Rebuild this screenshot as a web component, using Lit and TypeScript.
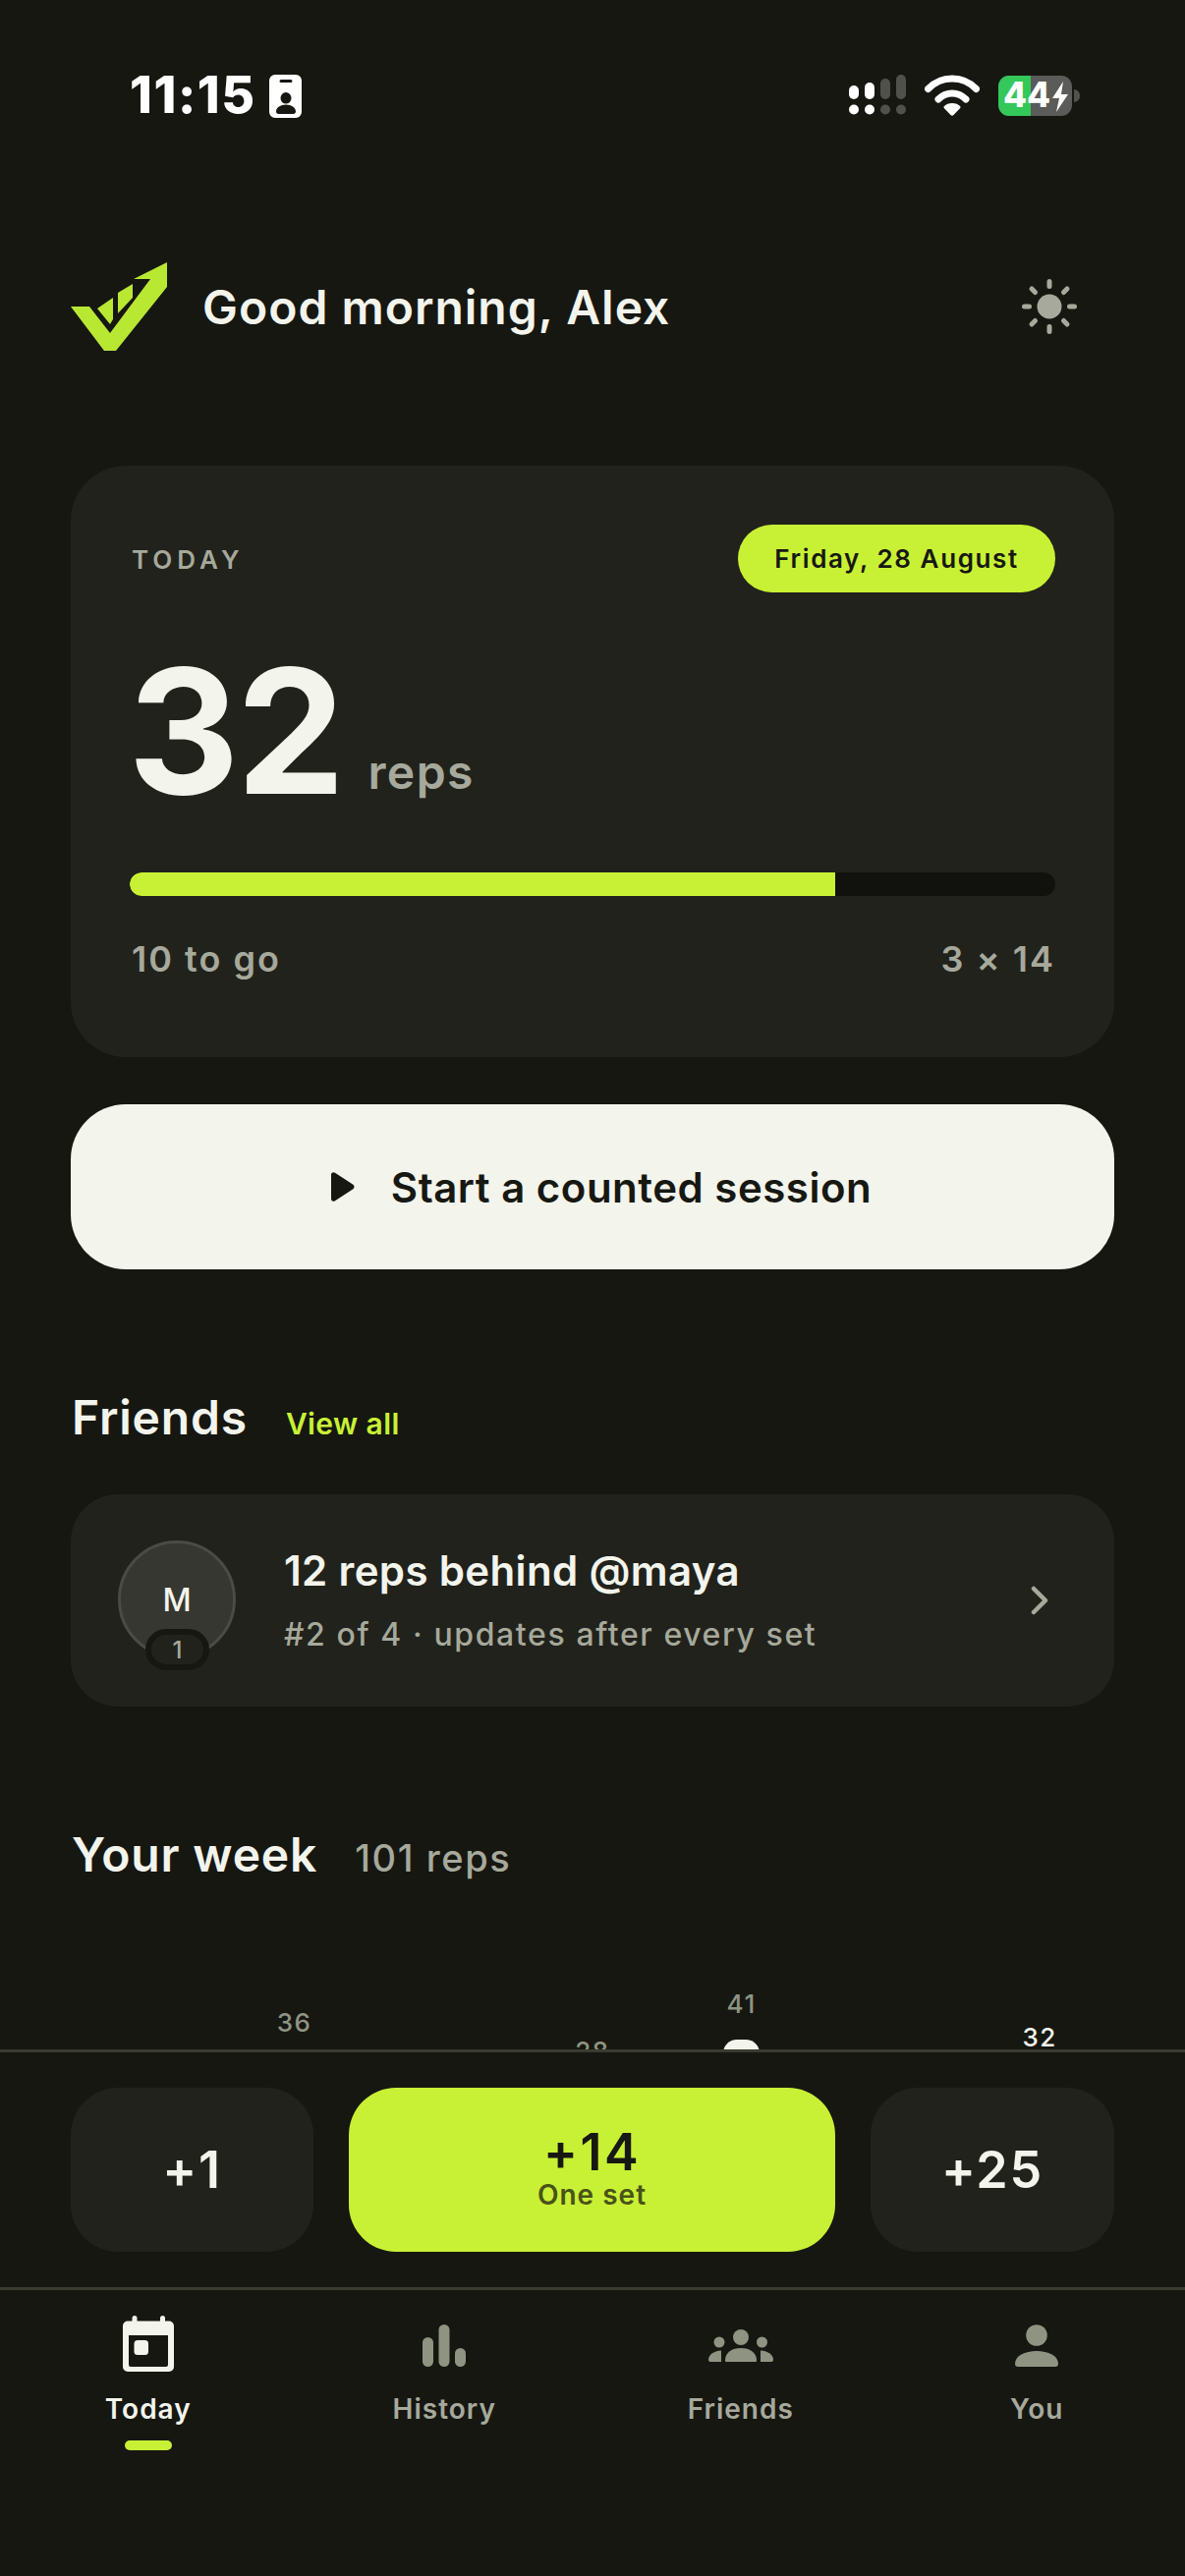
import { LitElement, html, css } from "lit";
import { customElement } from "lit/decorators.js";

const week = [22, 36, 18, 28, 41, 12, 32];

@customElement("app-root")
export class AppRoot extends LitElement {
  static styles = css`
    :host { display: block; width: 1206px; height: 2622px; background: #161711; color: #f3f4ec; font-family: Inter, "Liberation Sans", sans-serif; overflow: hidden; }
    .root { height: 2622px; display: flex; flex-direction: column; }
    .main { flex: 1; min-height: 0; overflow: hidden; padding: 0 72px; }
    svg { display: block; flex: none; }
    .status { height: 267px; box-sizing: border-box; padding: 74px 106px 0 132px; display: flex; align-items: flex-start; margin: 0 -72px; }
    .time { font-size: 52px; font-weight: 800; line-height: 46px; color: #fff; letter-spacing: 1.5px; }
    .badge { margin-left: 13px; margin-top: 2px; }
    .status-right { margin-left: auto; display: flex; align-items: flex-start; gap: 19px; margin-top: 2px; }
    .header { height: 90px; display: flex; align-items: center; margin-bottom: 117px; }
    .greet { margin-left: 36px; font-size: 48px; font-weight: 600; letter-spacing: 1px; flex: 1; }
    .sun { margin-right: 38px; }
    .card { background: #21221c; border-radius: 56px; padding: 60px 60px 0; height: 602px; box-sizing: border-box; }
    .top { display: flex; justify-content: space-between; align-items: center; height: 69px; padding-left: 2px; }
    .today { font-size: 26px; font-weight: 600; letter-spacing: 5px; color: #a6a99b; margin-top: 2px; }
    .pill { background: #c8f135; color: #171812; border-radius: 35px; height: 69px; width: 323px; display: flex; align-items: center; justify-content: center; font-size: 26px; font-weight: 600; letter-spacing: 1.6px; }
    .count { display: flex; align-items: flex-end; height: 225px; margin-top: 28px; margin-left: -2px; }
    .num { font-size: 176px; font-weight: 700; line-height: 225px; letter-spacing: -3px; }
    .unit { font-size: 48px; font-weight: 600; line-height: 60px; color: #a6a99b; margin-left: 26px; letter-spacing: 1.4px; padding-bottom: 40px; }
    .track { height: 24px; margin-top: 32px; border-radius: 12px; background: #11120e; overflow: hidden; }
    .fill { height: 100%; background: #c8f135; border-radius: 12px 0 0 12px; }
    .foot { display: flex; justify-content: space-between; margin-top: 42px; font-size: 36px; font-weight: 600; color: #a6a99b; line-height: 44px; padding-left: 2px; letter-spacing: 2px; }
    .start { height: 168px; margin-top: 48px; background: #f3f4ec; border-radius: 56px; display: flex; align-items: center; justify-content: center; color: #171812; font-size: 42px; font-weight: 600; gap: 37px; letter-spacing: 0.5px; padding-left: 18px; }
    .sec { display: flex; align-items: baseline; }
    .friends-h { margin-top: 121px; height: 60px; }
    h2 { margin: 0; font-size: 48px; font-weight: 600; letter-spacing: 0.8px; line-height: 60px; padding-left: 1px; }
    .view { margin-left: 39px; font-size: 30px; font-weight: 600; color: #c8f135; letter-spacing: 0.4px; }
    .friend { margin-top: 48px; height: 216px; background: #21221c; border-radius: 48px; display: flex; align-items: center; padding: 0 66px 0 48px; }
    .avatar { position: relative; width: 120px; height: 120px; box-sizing: border-box; border-radius: 50%; background: #363730; border: 3px solid #4a4b44; display: flex; align-items: center; justify-content: center; font-size: 32px; font-weight: 500; flex: none; margin-top: -2px; }
    .rank { position: absolute; left: 25px; top: 87px; width: 65px; height: 42px; box-sizing: border-box; border: 6px solid #161711; border-radius: 21px; background: #21221c; color: #a6a99b; display: flex; align-items: center; justify-content: center; font-size: 24px; font-weight: 500; }
    .ftext { flex: 1; margin-left: 49px; }
    .ft { font-size: 42px; font-weight: 600; line-height: 52px; letter-spacing: 0.35px; }
    .fs { font-size: 32px; font-weight: 500; color: #a6a99b; line-height: 44px; margin-top: 17px; letter-spacing: 1.6px; }
    .week-h { margin-top: 121px; }
    .wk { margin-left: 38px; font-size: 38px; font-weight: 500; color: #a6a99b; letter-spacing: 1.6px; }
    .chart { margin-top: 20px; height: 290px; display: grid; grid-template-columns: repeat(7, 1fr); align-items: end; }
    .col { display: flex; flex-direction: column; align-items: center; gap: 22px; }
    .lab { font-size: 26px; font-weight: 500; line-height: 28px; color: #8f9482; letter-spacing: 1.5px; }
    .lab.cur { color: #f3f4ec; font-weight: 500; }
    .bar { width: 35px; background: #3a3b33; border-radius: 14px 14px 0 0; }
    .bar.top { background: #f3f4ec; }
    .bar.cur { background: #c8f135; }
    .bottom { flex: none; background: #161711; border-top: 3px solid #3a3b31; }
    .quick { display: grid; grid-template-columns: 247px 1fr 248px; gap: 36px; padding: 36px 72px; border-bottom: 3px solid #3a3b31; }
    .q { height: 167px; background: #21221c; border-radius: 48px; display: flex; flex-direction: column; align-items: center; justify-content: center; font-size: 52px; font-weight: 600; letter-spacing: 1.8px; }
    .q.main-q { background: #c8f135; color: #171812; }
    .q .big { line-height: 54px; margin-top: -4px; letter-spacing: 2.5px; }
    .q .sm { font-size: 28px; font-weight: 600; letter-spacing: 1px; color: #4a5218; line-height: 30px; margin-top: 1px; }
    .tabs { display: grid; grid-template-columns: repeat(4, 1fr); height: 291px; }
    .tab { display: flex; flex-direction: column; align-items: center; padding-top: 26px; font-size: 28px; font-weight: 600; letter-spacing: 1px; color: #a6a99b; }
    .tab.on { color: #f3f4ec; }
    .ic { height: 58px; margin-bottom: 20px; }
    .lb { line-height: 34px; }
    .ind { width: 48px; height: 10px; border-radius: 5px; background: #c8f135; margin-top: 15px; }
  `;

  render() {
    return html`<div class="root">
      <div class="main">
        <div class="status">
          <span class="time">11:15</span>
          <svg class="badge" width="33" height="44" viewBox="0 0 33 44"><path fill="#fff" fill-rule="evenodd" d="M6 0h21a6 6 0 0 1 6 6v32a6 6 0 0 1-6 6H6a6 6 0 0 1-6-6V6a6 6 0 0 1 6-6zM12 5a1.500 1.500 0 0 0 0 3h10a1.500 1.500 0 0 0 0-3zM17 18a5.500 5.800 0 1 0 0 11.600 5.500 5.800 0 1 0 0-11.600zM17 30.500c-5.500 0-10 3-10 7 0 1.500 1 2.500 2.500 2.500h15c1.500 0 2.500-1 2.500-2.500 0-4-4.500-7-10-7z"/></svg>
          <div class="status-right">
            <svg width="58" height="41" viewBox="0 0 58 41"><g fill="#fff"><rect x="0" y="11" width="10" height="14" rx="5"/><rect x="16" y="8" width="10" height="17" rx="5"/><circle cx="5" cy="35.500" r="5"/><circle cx="21" cy="35.500" r="5"/></g><g fill="#50514c"><rect x="32" y="4" width="10" height="21" rx="5"/><rect x="48" y="0" width="10" height="25" rx="5"/><circle cx="37" cy="35.500" r="5"/><circle cx="53" cy="35.500" r="5"/></g></svg>
            <svg width="56" height="42" viewBox="0 0 56 42"><g fill="none" stroke="#fff" stroke-width="7" stroke-linecap="round"><path d="M3.500 14.500C17 .500 39 .500 52.500 14.500"/><path d="M14 25c8-8 20-8 28 0"/></g><path fill="#fff" d="M28 29c3.500 0 6 1 8 3 .7.700.6 1.500 0 2.200l-6.500 6.800c-.9.900-2 .9-3 0L20 34.200c-.6-.7-.7-1.500 0-2.200 2-2 4.500-3 8-3z"/></svg>
            <svg width="84" height="42" viewBox="0 0 84 42">
              <rect x="0" y="1" width="75" height="41" rx="11" fill="#5b5b59"/>
              <path d="M11 1h22v41H11A11 11 0 0 1 0 31V12A11 11 0 0 1 11 1z" fill="#34c759"/>
              <path d="M77 15c4 .5 6 3 6 6.500s-2 6-6 6.500z" fill="#50514c"/>
              <text x="5" y="33" font-size="35" font-weight="800" fill="#fff" font-family="Inter, sans-serif">44</text>
              <path d="M66 7L55 24h7l-3 14 12-18h-7z" fill="#fff"/>
            </svg>
          </div>
        </div>

        <div class="header">
          <svg width="98" height="90" viewBox="0 0 98 90"><path fill="#b9e833" d="M0 45h19l21 27 41-55H64l34-17v25L46 90H34z"/><path fill="#b9e833" d="M27 47l16-11v22l-3 5zM48 31l15-9v14L48 52z"/></svg>
          <div class="greet">Good morning, Alex</div>
          <svg class="sun" width="56" height="56" viewBox="0 0 56 56"><circle cx="28" cy="28" r="12.500" fill="#a6a99b"/><g stroke="#a6a99b" stroke-width="5" stroke-linecap="round"><path d="M28 2.500v5M28 48.500v5M2.500 28h5M48.500 28h5M10 10l3.500 3.500M42.500 42.500l3.500 3.500M46 10l-3.500 3.500M13.500 42.500L10 46"/></g></svg>
        </div>

        <div class="card">
          <div class="top"><span class="today">TODAY</span><span class="pill">Friday, 28 August</span></div>
          <div class="count"><span class="num">32</span><span class="unit">reps</span></div>
          <div class="track"><div class="fill" style="width:76.200%"></div></div>
          <div class="foot"><span>10 to go</span><span>3 × 14</span></div>
        </div>

        <div class="start">
          <svg width="24" height="30" viewBox="0 0 24 30"><path fill="#171812" d="M0 3c0-2.500 2-3.500 4-2.300l18 11.800c2 1.300 2 3.700 0 5L4 29.300C2 30.500 0 29.500 0 27z"/></svg>
          <span>Start a counted session</span>
        </div>

        <div class="sec friends-h"><h2>Friends</h2><span class="view">View all</span></div>
        <div class="friend">
          <div class="avatar">M<span class="rank">1</span></div>
          <div class="ftext"><div class="ft">12 reps behind @maya</div><div class="fs">#2 of 4 · updates after every set</div></div>
          <svg width="20" height="30" viewBox="0 0 20 30"><path d="M4 3l12 12L4 27" fill="none" stroke="#a6a99b" stroke-width="4.500" stroke-linecap="round" stroke-linejoin="round"/></svg>
        </div>

        <div class="sec week-h"><h2>Your week</h2><span class="wk">101 reps</span></div>
        <div class="chart">
          ${week.map((v, i) => html`<div class="col">
            <span class="lab ${i === 6 ? "cur" : ""}">${v}</span>
            <div class="bar ${i === 4 ? "top" : ""} ${i === 6 ? "cur" : ""}" style="height:${v * 3.7}px"></div>
          </div>`)}
        </div>
      </div>

      <div class="bottom">
        <div class="quick">
          <div class="q">+1</div>
          <div class="q main-q"><span class="big">+14</span><span class="sm">One set</span></div>
          <div class="q">+25</div>
        </div>
        <div class="tabs">
          <div class="tab on">
            <svg class="ic" width="52" height="58" viewBox="0 0 52 58"><g fill="#f3f4ec"><rect x="9.500" y="0" width="5" height="10" rx="2.500"/><rect x="38" y="0" width="5" height="10" rx="2.500"/><path fill-rule="evenodd" d="M5 5.500h42a5 5 0 0 1 5 5V52a5 5 0 0 1-5 5H5a5 5 0 0 1-5-5V10.500a5 5 0 0 1 5-5zM6 20v30a2 2 0 0 0 2 2h36a2 2 0 0 0 2-2V20z"/><rect x="11.500" y="25" width="14.500" height="15" rx="3.500"/></g></svg>
            <span class="lb">Today</span><span class="ind"></span>
          </div>
          <div class="tab">
            <svg class="ic" width="44" height="58" viewBox="0 0 44 58"><g fill="#8f9482"><rect x="0" y="22" width="11" height="30" rx="5.500"/><rect x="16.500" y="9" width="11" height="43" rx="5.500"/><rect x="33" y="33" width="11" height="19" rx="5.500"/></g></svg>
            <span class="lb">History</span>
          </div>
          <div class="tab">
            <svg class="ic" width="66" height="58" viewBox="0 0 66 58"><g fill="#8f9482"><circle cx="33" cy="22" r="8"/><circle cx="11" cy="27" r="5.500"/><circle cx="54.500" cy="27" r="5.500"/><path d="M17 45.500c0-8 7-12.500 16-12.500s16 4.500 16 12.500c0 1-.5 1.500-1.500 1.500h-29c-1 0-1.500-.5-1.500-1.500z"/><path d="M13 35.500V47H2c-1 0-2-.8-2-2 0-5 5-9 13-9.500z"/><path d="M53 35.500V47h11c1 0 2-.8 2-2 0-5-5-9-13-9.500z"/></g></svg>
            <span class="lb">Friends</span>
          </div>
          <div class="tab">
            <svg class="ic" width="44" height="58" viewBox="0 0 44 58"><g fill="#8f9482"><circle cx="22" cy="20" r="10.800"/><path d="M0 49c0-8 10-13 22-13s22 5 22 13c0 2-1 3-3 3H3c-2 0-3-1-3-3z"/></g></svg>
            <span class="lb">You</span>
          </div>
        </div>
      </div>
    </div>`;
  }
}
